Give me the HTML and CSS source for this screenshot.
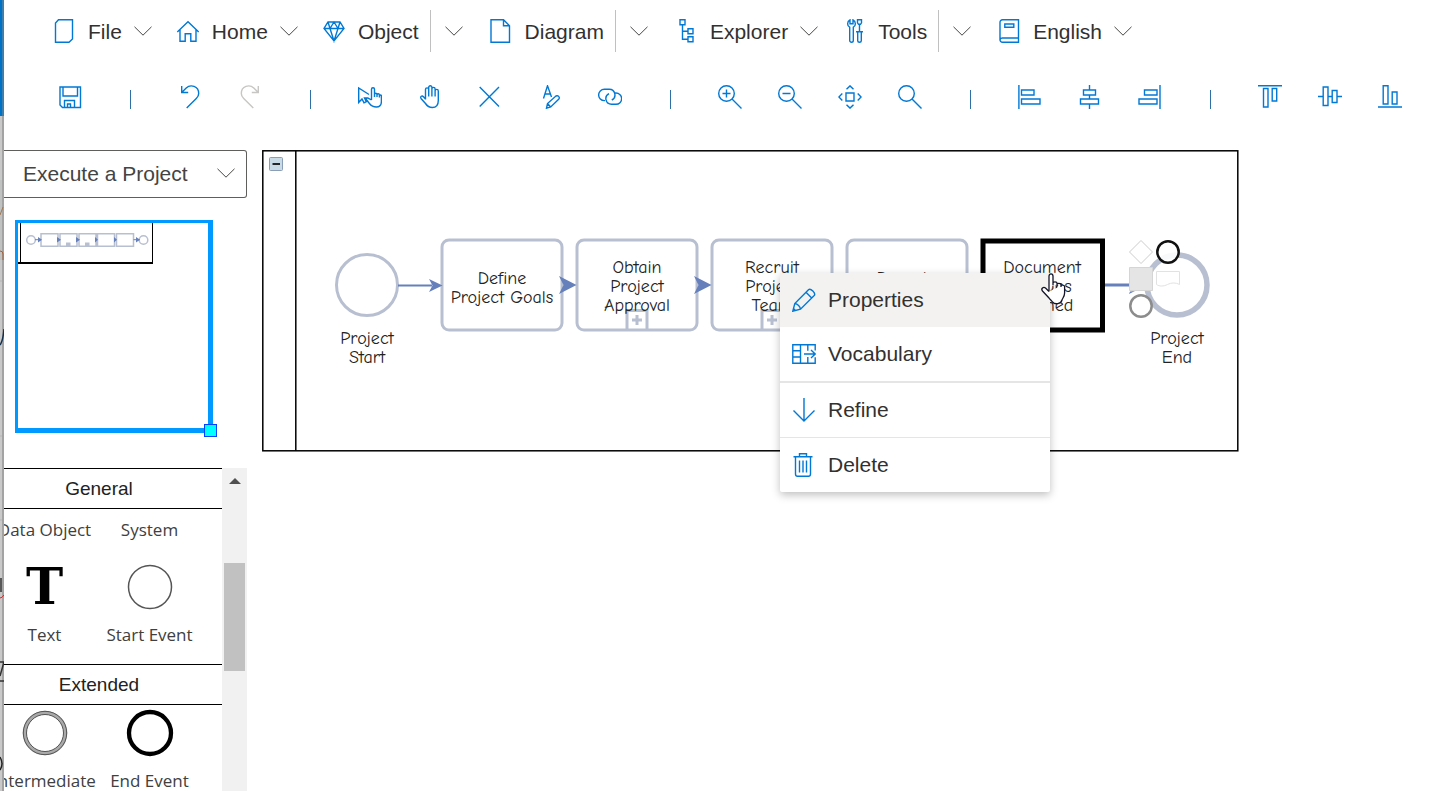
FILE: index.html
```html
<!DOCTYPE html>
<html lang="en">
<head>
<meta charset="utf-8">
<title>Execute a Project</title>
<link rel="stylesheet" href="styles.css">
</head>
<body>
<svg class="defs" aria-hidden="true">
  <symbol id="chevron" viewBox="0 0 18 10"><path d="M.5.8 9 9.200 17.500.8" fill="none" stroke="currentColor" stroke-width="1"/></symbol>
</svg>

<div class="backdrop" aria-hidden="true">
  <div class="backdrop-title"></div>
  <svg class="backdrop-page" viewBox="0 116 4 675" width="4" height="675">
    <rect y="116" width="4" height="675" fill="#c9c9c9"/>
    <path d="M0 180h4v80H0z" fill="#bfc2c0"/>
    <path d="M0 281h3M0 436h3M0 520h3" stroke="#b5b5b5"/>
    <path d="M3 116v675" stroke="#a3a3a3" stroke-width="2"/>
    <path d="M0 215 3 207" stroke="#a07850" fill="none"/>
    <path d="M0 251q3 0 3 3v6" stroke="#a0623c" fill="none"/>
    <path d="M4 329q-1 12-4 16" stroke="#14304f" stroke-width="1.500" fill="none"/>
    <path d="M0 598q2 0 4-3" stroke="#d22" fill="none"/>
    <path d="M0 662h4L0 676M0 681h4M1 578v14" stroke="#333" stroke-width="1.500" fill="none"/>
    <path d="M0 757q4 7 0 13" stroke="#222" stroke-width="1.500" fill="none"/>
  </svg>
</div>

<div class="app">
  <nav class="menubar" aria-label="Main menu">
    <button class="menu-item"><svg class="icon" viewBox="0 0 24 24"><path d="M6.500.7h14V20l-3.500 3.300H3.500V4z"/></svg><span class="menu-label">File</span><svg class="chevron"><use href="#chevron"/></svg></button>
    <button class="menu-item"><svg class="icon" viewBox="0 0 24 24"><path d="M1.300 13 12 2.800 22.700 13M4 10.700v11.500h5.200v-7.500h5.600v7.500H20V10.700"/></svg><span class="menu-label">Home</span><svg class="chevron"><use href="#chevron"/></svg></button>
    <div class="split">
      <button class="menu-item"><svg class="icon" viewBox="0 0 24 24"><path d="M6 3h12l4 6.500L12 22 2 9.500zM2 9.500h20M6 3l2 6.500L12 22l4-12.500L18 3M8 9.500 12 3l4 6.500"/></svg><span class="menu-label">Object</span></button>
      <button class="split-toggle" aria-label="More object commands"><svg class="chevron"><use href="#chevron"/></svg></button>
    </div>
    <div class="split">
      <button class="menu-item"><svg class="icon" viewBox="0 0 24 24"><path d="M2 .7h12.500l6 6v16.600H2zM14.500.7v6h6"/></svg><span class="menu-label">Diagram</span></button>
      <button class="split-toggle" aria-label="More diagram commands"><svg class="chevron"><use href="#chevron"/></svg></button>
    </div>
    <button class="menu-item"><svg class="icon" viewBox="0 0 24 24"><path d="M6 .7h5v5H6zM14 9.700h5v5h-5zM14 17.700h5v5h-5zM8.500 5.700v14.500H14M8.500 12.200H14"/></svg><span class="menu-label">Explorer</span><svg class="chevron"><use href="#chevron"/></svg></button>
    <div class="split">
      <button class="menu-item"><svg class="icon" viewBox="0 0 24 24"><path d="M8 .8v4h3v-4c3.200 1.700 3 6.200.3 7.400V21.500c0 2.400-3.600 2.400-3.600 0V8.200C5 7 4.800 2.500 8 .8zM15.500.8h4v3l-1 1.500h-2l-1-1.500zM17.500 5.300v7.400M14 12.700h7M15.700 12.700v9c0 2 3.600 2 3.600 0v-9"/></svg><span class="menu-label">Tools</span></button>
      <button class="split-toggle" aria-label="More tools"><svg class="chevron"><use href="#chevron"/></svg></button>
    </div>
    <button class="menu-item"><svg class="icon" viewBox="0 0 24 24"><path d="M21.500.7H5.500A2.500 2.500 0 0 0 3 3.200v17.500a2.500 2.500 0 0 0 2.500 2.600h16zM21.500 19h-16A2.300 2.300 0 0 0 3 21M7.800 5h9v3.300h-9z"/></svg><span class="menu-label">English</span><svg class="chevron"><use href="#chevron"/></svg></button>
  </nav>

  <div class="toolbar" role="toolbar" aria-label="Diagram tools">
    <button class="tool" aria-label="Save"><svg class="icon" viewBox="0 0 24 24"><path d="M2 2h20.500v20.500H4.500L2 20zM5 2v9h14.500V2M6.500 22.500v-7h10v7M9.500 22.500v-3.500h3v3.500"/></svg></button>
    <span class="separator"></span>
    <button class="tool" aria-label="Undo"><svg class="icon" viewBox="0 0 24 24"><path d="M3.700 1v6.500h6.500M3.700 7.500 8.200 3C12.500-1 20.700 1 20.700 8.500c0 2.200-1 3.700-2.400 5.100L8.700 23"/></svg></button>
    <button class="tool tool-off" aria-label="Redo" disabled><svg class="icon" viewBox="0 0 24 24"><path d="M20.300 1v6.500h-6.500M20.300 7.500 15.800 3C11.500-1 3.300 1 3.300 8.500c0 2.200 1 3.700 2.400 5.100L15.300 23"/></svg></button>
    <span class="separator"></span>
    <button class="tool" aria-label="Select"><svg class="icon" viewBox="0 0 24 24"><path d="M11 9.500.7 3v14.500L4 14l2 3.800 2.300-1.200L6.500 13h4M13.500 15V4.200a1.500 1.500 0 0 1 3 0V12m0-2.500a1.200 1.200 0 0 1 2.500 0V12m0-2a1.200 1.200 0 0 1 2.400 0v2.500m0-1.500a1 1 0 0 1 2 0v5.500c0 3.700-2 5.500-5 5.500-3.500 0-5-1-7-3.500L8.700 15c-1-1.500.5-2.500 1.800-1.700l3 1.700"/></svg></button>
    <button class="tool" aria-label="Pan"><svg class="icon" viewBox="0 0 24 24"><path d="M7.500 14.500V4.500a1.600 1.600 0 0 1 3.200 0v7M10.700 6V2.400a1.600 1.600 0 0 1 3.200 0v9M13.900 4a1.600 1.600 0 0 1 3.200 0v7.500M17.100 6a1.600 1.600 0 0 1 3.200 0v9.500c0 4.500-2.500 7-6 7-3.200 0-5-1.200-6.800-4L3 13.500c-1.200-2 1-3.300 2.500-1.800l2 2.300"/></svg></button>
    <button class="tool" aria-label="Remove"><svg class="icon" viewBox="0 0 24 24"><path d="m1.700 2 19.300 19.500M21 2 1.700 21.500"/></svg></button>
    <button class="tool" aria-label="Edit text"><svg class="icon" viewBox="0 0 24 24"><path d="M5.500 13.500 9.500.8l4 11.200M6.800 9h5.500M8.500 23.200l1-4.700 8.400-7.500c2.200-1 4.200 1 3 3l-8.200 8zM9.500 18.500l3.200 3.500"/></svg></button>
    <button class="tool" aria-label="Link"><svg class="icon" viewBox="0 0 24 24"><path d="M7 15.600H6.300a5.650 5.650 0 0 1 0-11.300h5a5.650 5.650 0 0 1 2.500 10.700M16.500 8h1.500a5.650 5.650 0 0 1 0 11.300h-4.500a5.650 5.650 0 0 1-2.500-10.700"/></svg></button>
    <span class="separator"></span>
    <button class="tool" aria-label="Zoom in"><svg class="icon" viewBox="0 0 24 24"><circle cx="8.500" cy="8.500" r="7.800"/><path d="m14 14 9.500 9.500M8.500 4.500v8M4.500 8.500h8"/></svg></button>
    <button class="tool" aria-label="Zoom out"><svg class="icon" viewBox="0 0 24 24"><circle cx="8.500" cy="8.500" r="7.800"/><path d="m14 14 9.500 9.500M4.500 8.500h8"/></svg></button>
    <button class="tool" aria-label="Fit to page"><svg class="icon" viewBox="0 0 24 24"><path d="M8 8h8v8H8zM8.500 4.300 12 .9l3.500 3.400M8.500 19.700l3.500 3.400 3.500-3.400M4.300 8.500.9 12l3.400 3.500M19.700 8.500l3.400 3.500-3.400 3.500"/></svg></button>
    <button class="tool" aria-label="Find"><svg class="icon" viewBox="0 0 24 24"><circle cx="8.500" cy="8.500" r="7.800"/><path d="m14 14 9.500 9.500"/></svg></button>
    <span class="separator"></span>
    <button class="tool" aria-label="Align left"><svg class="icon" viewBox="0 0 24 24"><path d="M.9 0v24M3.500 5h12.500v5H3.500zM3.500 14h18.500v5H3.500z"/></svg></button>
    <button class="tool" aria-label="Align centre"><svg class="icon" viewBox="0 0 24 24"><path d="M11.500 0v5M11.500 10v4M11.500 19v5M5.500 5h12v5h-12zM2.500 14h18v5h-18z"/></svg></button>
    <button class="tool" aria-label="Align right"><svg class="icon" viewBox="0 0 24 24"><path d="M22 0v24M6.500 5h12.500v5H6.500zM1 14h18v5H1z"/></svg></button>
    <span class="separator"></span>
    <button class="tool" aria-label="Align top"><svg class="icon" viewBox="0 0 24 24"><path d="M0 .8h24M5.500 3.500h4.500V22H5.500zM14.200 3.500h4.500v12.500h-4.500z"/></svg></button>
    <button class="tool" aria-label="Align middle"><svg class="icon" viewBox="0 0 24 24"><path d="M0 11.500h5.200M10 11.500h4.200M19 11.500h5M5.200 2H10v18.500H5.200zM14.200 5.500H19v12h-4.800z"/></svg></button>
    <button class="tool" aria-label="Align bottom"><svg class="icon" viewBox="0 0 24 24"><path d="M0 22h24M5.200.8H10V19H5.200zM14.200 7H19v12h-4.800z"/></svg></button>
  </div>

  <main class="workspace">
    <aside class="side">
      <div class="picker">
        <select class="picker-select" aria-label="Diagram"><option>Execute a Project</option></select>
        <svg class="chevron picker-chevron"><use href="#chevron"/></svg>
      </div>

      <div class="overview">
        <svg viewBox="18 223 135 41" width="135" height="41">
          <g fill="none" stroke="#b8bfd0" stroke-width="1.500">
            <circle cx="31" cy="240" r="4.300"/><circle cx="143.500" cy="240" r="4.300"/>
            <path d="M41 233.700h17v12.600H41zM60 233.700h17v12.600H60zM79 233.700h17v12.600H79zM97.500 233.700h17v12.600h-17zM116.500 233.700h17v12.600h-17z"/>
          </g>
          <path d="M66 242.500h4.500v4H66zM85 242.500h4.500v4H85z" fill="#b8bfd0"/>
          <path d="M35 239.700h6M133.500 239.700h6" stroke="#6680bb"/>
          <path d="m38 237 4 2.700-4 2.700zM57 237l4 2.700-4 2.700zM76 237l4 2.700-4 2.700zM95 237l3 2.700-3 2.700zM114 237l3 2.700-3 2.700zM136 237l4 2.700-4 2.700z" fill="#6680bb"/>
          <path d="M20.500 223v39.500M152.500 223v40" stroke="#000" fill="none"/>
          <path d="M18 263h135" stroke="#000" stroke-width="2"/>
        </svg>
        <span class="overview-handle"></span>
      </div>

      <div class="palette">
        <div class="palette-view">
          <section class="stencil">
            <h2 class="stencil-title">General</h2>
            <div class="stencil-body">
              <div class="stencil-grid stencil-scrolled">
                <div class="shape"><span class="shape-icon"></span>Data Object</div>
                <div class="shape"><span class="shape-icon"></span>System</div>
                <div class="shape"><span class="shape-icon shape-letter">T</span>Text</div>
                <div class="shape"><svg class="shape-icon" viewBox="0 0 48 48"><circle cx="24" cy="24" r="21.500" fill="#fff" stroke="#555" stroke-width="1.500"/></svg>Start Event</div>
              </div>
            </div>
          </section>
          <section class="stencil">
            <h2 class="stencil-title">Extended</h2>
            <div class="stencil-body">
              <div class="stencil-grid">
                <div class="shape"><svg class="shape-icon" viewBox="0 0 48 48"><g fill="none"><circle cx="24" cy="24" r="20.300" stroke="#aaa" stroke-width="4"/><circle cx="24" cy="24" r="21.700" stroke="#555"/><circle cx="24" cy="24" r="18.500" stroke="#555"/></g></svg>Intermediate</div>
                <div class="shape"><svg class="shape-icon" viewBox="0 0 48 48"><circle cx="24" cy="24" r="21" fill="#fff" stroke="#000" stroke-width="4.300"/></svg>End Event</div>
              </div>
            </div>
          </section>
        </div>
        <div class="scrollbar" aria-hidden="true"><span class="scroll-up"></span><span class="scroll-thumb"></span></div>
      </div>
    </aside>

    <div class="canvas">
      <svg class="diagram" viewBox="262 150 978 302" width="978" height="302">
        <g fill="none" stroke="#000" stroke-width="1.500"><rect x="262.800" y="150.800" width="975" height="300"/><path d="M295.800 150.800v300"/></g>
        <rect x="269.500" y="157.500" width="13" height="13" rx="1" fill="#c9dbe6" stroke="#8a9fb5"/>
        <path d="M272.500 164h7.500" stroke="#111" stroke-width="1.800"/>

        <g fill="#fff" stroke="#b8bfd0" stroke-width="3">
          <circle cx="367" cy="285" r="30.500"/>
          <rect x="442" y="240" width="120" height="90" rx="7"/>
          <rect x="577" y="240" width="120" height="90" rx="7"/>
          <rect x="712" y="240" width="120" height="90" rx="7"/>
          <rect x="847" y="240" width="120" height="90" rx="7"/>
          <circle cx="1177" cy="285" r="30" stroke-width="5.500"/>
        </g>
        <rect x="983" y="241" width="119.500" height="89" fill="#fff" stroke="#000" stroke-width="5"/>

        <g fill="none" stroke="#b8bfd0" stroke-width="3">
          <path d="M627 330v-19.500h20V330M637 315v10M632 320h10"/>
          <path d="M762 330v-19.500h20V330M772 315v10M767 320h10"/>
        </g>
        <path d="M398 285.500h34" stroke="#6680bb" stroke-width="1.800"/>
        <path d="M1105 285h40" stroke="#6680bb" stroke-width="3"/>
        <path d="m442.500 285.500-13.500-6.500 3.500 6.500-3.500 6.500zM576.500 285l-17.500-9 4.500 9-4.500 9zM711.500 285l-17.500-9 4.500 9-4.500 9z" fill="#6680bb"/>

        <g class="diagram-text">
          <text x="367" y="344">Project</text><text x="367" y="363">Start</text>
          <text x="502" y="284">Define</text><text x="502" y="303">Project Goals</text>
          <text x="637" y="273">Obtain</text><text x="637" y="292">Project</text><text x="637" y="311">Approval</text>
          <text x="772" y="273">Recruit</text><text x="772" y="292">Project</text><text x="772" y="311">Team</text>
          <text x="902" y="284">Report</text>
          <text x="1042" y="273">Document</text><text x="1042" y="292">Lessons</text><text x="1042" y="311">Learned</text>
          <text x="1177" y="344">Project</text><text x="1177" y="363">End</text>
        </g>

        <path d="m1141 240.500 11.500 11.500-11.500 11.500-11.500-11.500z" fill="#fff" stroke="#ccc"/>
        <circle cx="1168" cy="252" r="10.700" fill="#fff" fill-opacity=".9" stroke="#111" stroke-width="2.500"/>
        <path d="M1129.500 267.500h23v23h-23z" fill="#e5e5e5" stroke="#d5d5d5"/>
        <path d="M1156.500 271.500h23v13c-4-2-8-2-12 0s-8 2-11 0z" fill="#fff" stroke="#e2e2e2"/>
        <path d="m1129 294 1-2.500 5-.5z" fill="#6680bb"/>
        <circle cx="1141" cy="306" r="10.700" fill="#fff" stroke="#8c8c8c" stroke-width="2.500"/>
      </svg>

      <div class="context-menu" role="menu">
        <button class="context-item context-active" role="menuitem"><svg class="icon" viewBox="0 0 24 24"><path d="m.8 23.200 2-7.700L16.500 1.800c2-2 7.700 3.500 5.700 5.700L8.500 21.200zM2.800 15.500c2.800.3 5.400 2.900 5.700 5.700M14 4.300l5.700 5.700M1.500 20.500l2 2"/></svg>Properties</button>
        <button class="context-item" role="menuitem"><svg class="icon" viewBox="0 0 24 24"><path d="M23.200 8.500V2.800H.8v18.400h22.400v-6M.8 8.800h7.700M.8 15h7.700M8.500 2.800v18.400M15.800 2.800v6M15.800 15v6.200M12 12h11M19 8l4.200 4-4.200 4"/></svg>Vocabulary</button>
        <hr class="context-rule context-rule-bold">
        <button class="context-item" role="menuitem"><svg class="icon" viewBox="0 0 24 24"><path d="M12 0v23M1.500 12.500 12 23l10.500-10.500"/></svg>Refine</button>
        <hr class="context-rule">
        <button class="context-item" role="menuitem"><svg class="icon" viewBox="0 0 24 24"><path d="M1.500 3.700h19M7.500 3.700V.8h7v2.900M3.500 3.700V21c0 1.500.5 2.200 2 2.200h11c1.500 0 2-.7 2-2.200V3.700M7.500 7.500v12M11 7.500v12M14.500 7.500v12"/></svg>Delete</button>
      </div>
      <svg class="pointer" viewBox="0 0 26 33"><path d="M9 18.500V3.200c0-3 4-3 4 0V12m0-2c0-1.600 4-1.600 4 0v3m0-1.500c0-1.500 4-1.500 4 .2V14m0-1c0-1.500 3.600-1.200 3.600.5V20c0 3.500-2 5-2.600 7-1 4-7 5-9.500 2-1-1.500-2.500-2.500-3.500-4l-6.500-7c-2-2.500 1-4.500 3-3L9 18.500" fill="#fff" stroke="#15152a" stroke-width="1.300"/></svg>
    </div>
  </main>
</div>
</body>
</html>
```
FILE: styles.css
```css
* { box-sizing: border-box; }

body {
  margin: 0;
  height: 100vh;
  display: flex;
  overflow: hidden;
  background: #fff;
  color: #323130;
  font: 21px/28px "Liberation Sans", Arial, sans-serif;
}

button, select { font: inherit; color: inherit; }

button {
  margin: 0;
  padding: 0;
  border: 0;
  background: none;
}

.defs { position: absolute; width: 0; height: 0; }

/* Sliver of the window behind */
.backdrop {
  flex: none;
  width: 4px;
  overflow: hidden;
}
.backdrop-title {
  height: 116px;
  background: #0072c6;
  border-right: 2px solid #3f7fae;
}
.backdrop-page { display: block; }

.app {
  flex: 1;
  min-width: 0;
  display: flex;
  flex-direction: column;
}

.icon {
  flex: none;
  width: 24px;
  height: 24px;
  fill: none;
  stroke: #0078d4;
  stroke-width: 1.4;
}
.chevron {
  flex: none;
  width: 18px;
  height: 10px;
  color: #484644;
}

/* Menu bar */
.menubar {
  display: flex;
  align-items: center;
  gap: 24px;
  height: 62px;
  padding-left: 48px;
}
.menu-item {
  display: flex;
  align-items: center;
  gap: 12px;
  height: 42px;
}
.menu-label { padding-top: 2px; }
.split {
  display: flex;
  align-items: center;
  padding-right: 2px;
}
.split-toggle {
  display: flex;
  align-items: center;
  height: 42px;
  margin-left: 11px;
  padding-left: 14px;
  border-left: 1px solid #c0c0c0;
}

/* Tool bar */
.toolbar {
  display: flex;
  align-items: center;
  height: 70px;
  padding-left: 36px;
}
.tool, .separator {
  flex: none;
  width: 60px;
  display: flex;
  justify-content: center;
}
.tool-off .icon { stroke: #c8c6c4; }
.separator::before {
  content: "";
  width: 1px;
  height: 19px;
  margin-top: 5px;
  background: #2f6fa8;
}

/* Workspace */
.workspace {
  flex: 1;
  min-height: 0;
  display: flex;
  gap: 15px;
  padding-top: 18px;
}
.side {
  flex: none;
  width: 243px;
  display: flex;
  flex-direction: column;
}

.picker {
  position: relative;
  display: flex;
}
.picker-select {
  width: 100%;
  height: 48px;
  padding: 0 40px 0 19px;
  appearance: none;
  border: 1px solid #605e5c;
  border-left: 0;
  border-radius: 0 3px 3px 0;
  background: #fff;
  color: #444;
}
.picker-chevron {
  position: absolute;
  right: 12px;
  top: 18px;
}

.overview {
  position: relative;
  flex: none;
  width: 198px;
  height: 213px;
  margin: 22px 0 35px 11px;
  border: 3px solid #0099ff;
  border-right-width: 5px;
  border-bottom-width: 5px;
}
.overview svg { display: block; }
.overview-handle {
  position: absolute;
  right: -9px;
  bottom: -9px;
  width: 13px;
  height: 13px;
  border: 1px solid #0040ff;
  background: #00ffff;
}

.palette {
  flex: 1;
  min-height: 0;
  display: flex;
}
.palette-view {
  flex: 1;
  overflow: hidden;
}
.stencil { margin-left: -28px; }
.stencil-title {
  margin: 0;
  border: 1px solid #000;
  border-width: 1px 0;
  font-size: 19px;
  font-weight: 400;
  line-height: 39px;
  text-align: center;
  color: #222;
}
.stencil-body { overflow: hidden; }
.stencil-grid {
  display: grid;
  grid-template-columns: 105px 105px;
  grid-auto-rows: 105px;
  padding-left: 16px;
}
.stencil-scrolled { margin-top: -55px; }
.shape {
  display: flex;
  flex-direction: column;
  align-items: center;
  gap: 12px;
  padding-top: 4px;
  font: 17px/24px "Open Sans", "Noto Sans", sans-serif;
  white-space: nowrap;
  color: #404040;
}
.shape-icon {
  flex: none;
  width: 48px;
  height: 48px;
}
.shape-letter {
  font: bold 50px/48px "DejaVu Serif", serif;
  text-align: center;
  color: #000;
}

.scrollbar {
  flex: none;
  width: 25px;
  display: flex;
  flex-direction: column;
  align-items: center;
  background: #f1f1f1;
}
.scroll-up {
  margin-top: 10px;
  border: 6px solid transparent;
  border-top-width: 0;
  border-bottom-color: #505050;
}
.scroll-thumb {
  width: 21px;
  height: 108px;
  margin-top: 79px;
  background: #c1c1c1;
}

/* Diagram canvas */
.canvas {
  position: relative;
  flex: 1;
  min-width: 0;
}
.diagram { display: block; }
.diagram-text {
  font: 18px "Comic Sans MS", "Comic Neue", "Noto Sans", sans-serif;
  text-anchor: middle;
  fill: #222;
}

.context-menu {
  position: absolute;
  left: 518px;
  top: 123px;
  width: 270px;
  border-radius: 2px;
  background: #fff;
  box-shadow: 0 3px 8px rgba(0, 0, 0, .25);
}
.context-item {
  display: flex;
  align-items: center;
  gap: 12px;
  width: 100%;
  height: 54px;
  padding-left: 12px;
}
.context-active { background: #f3f2f1; }
.context-rule {
  height: 1px;
  margin: 0;
  border: 0;
  background: #e5e5e5;
}
.context-rule-bold { height: 2px; }

.pointer {
  position: absolute;
  left: 778px;
  top: 123px;
  width: 26px;
  height: 33px;
}
```
